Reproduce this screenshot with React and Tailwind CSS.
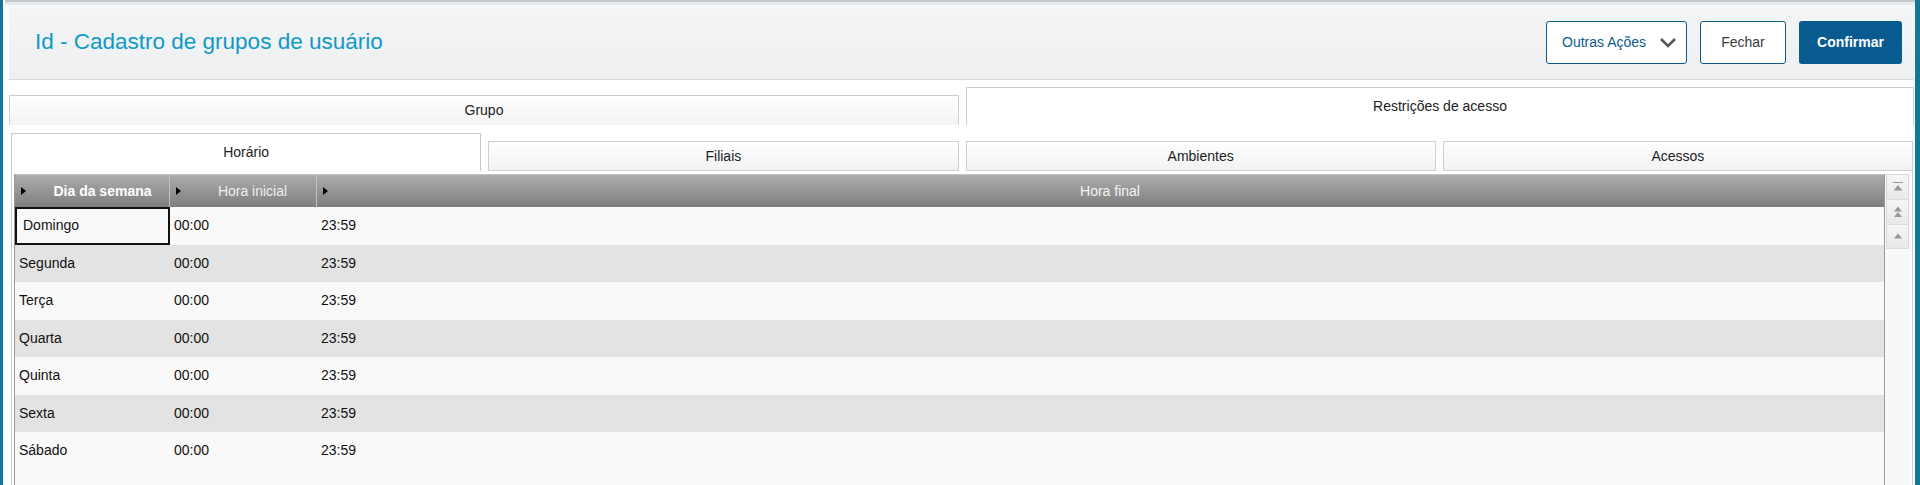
import React from 'react';

const rows = [
  { dia: 'Domingo', ini: '00:00', fim: '23:59' },
  { dia: 'Segunda', ini: '00:00', fim: '23:59' },
  { dia: 'Terça', ini: '00:00', fim: '23:59' },
  { dia: 'Quarta', ini: '00:00', fim: '23:59' },
  { dia: 'Quinta', ini: '00:00', fim: '23:59' },
  { dia: 'Sexta', ini: '00:00', fim: '23:59' },
  { dia: 'Sábado', ini: '00:00', fim: '23:59' },
];

const subTabs = ['Horário', 'Filiais', 'Ambientes', 'Acessos'];

function SortArrow() {
  return (
    <svg width="5" height="8" viewBox="0 0 5 8" className="shrink-0">
      <path d="M0 0 L5 4 L0 8 Z" fill="#000" />
    </svg>
  );
}

function ScrollIcon({ kind }) {
  return (
    <svg width="14" height="15" viewBox="0 0 14 15">
      {kind === 'top' && (
        <>
          <rect x="2" y="2" width="10" height="1" fill="#999" />
          <path d="M7 5 L11.5 10.5 L2.5 10.5 Z" fill="#999" />
        </>
      )}
      {kind === 'page' && (
        <>
          <path d="M7 1.5 L11 6.5 L3 6.5 Z" fill="#999" />
          <path d="M7 7 L11 12 L3 12 Z" fill="#999" />
        </>
      )}
      {kind === 'up' && <path d="M7 4.5 L11 9.5 L3 9.5 Z" fill="#999" />}
    </svg>
  );
}

export default function App() {
  return (
    <div
      className="w-[1920px] h-[485px] flex overflow-hidden bg-white text-[14px] text-[#222]"
      style={{ fontFamily: '"Liberation Sans", Arial, sans-serif' }}
    >
      {/* left accent */}
      <div className="w-[3px] bg-[#10789a] shrink-0" />

      <div className="flex-1 flex flex-col min-w-0">
        {/* top strip */}
        <div className="h-[5px] ml-[2px] border-t-2 border-[#c3c8cd] bg-[#e8eaec] shrink-0" />

        {/* header */}
        <header className="ml-[6px] mr-[1px] h-[75px] shrink-0 flex items-center justify-between bg-gradient-to-b from-[#f4f5f5] to-[#eeeff1] border-b border-[#d8d9da]">
          <h1 className="pl-[26px] text-[22.5px] text-[#0f9ac6] font-normal leading-none">
            Id - Cadastro de grupos de usuário
          </h1>
          <div className="flex items-center gap-[13px] pr-[12px]">
            <button className="w-[141px] h-[43px] bg-white border border-[#0e5c8a] rounded-[3px] flex items-center justify-between pl-[15px] pr-[9px] text-[#0e5c8a]">
              <span>Outras Ações</span>
              <svg width="18" height="11" viewBox="0 0 18 11">
                <path d="M2 2 L9 9 L16 2" fill="none" stroke="#555" strokeWidth="2.6" />
              </svg>
            </button>
            <button className="w-[86px] h-[43px] bg-white border border-[#0e5c8a] rounded-[3px] text-[#3a3a3a]">
              Fechar
            </button>
            <button className="w-[103px] h-[43px] bg-[#075b8f] rounded-[3px] text-white font-bold">
              Confirmar
            </button>
          </div>
        </header>

        {/* main tabs */}
        <div className="ml-[6px] mr-[1px] mt-[7px] flex items-end gap-[7px] shrink-0">
          <div className="w-[950px] h-[30px] flex items-center justify-center bg-gradient-to-b from-white to-[#f3f3f3] border border-b-0 border-[#cfcfcf] text-[#222]">
            Grupo
          </div>
          <div className="flex-1 h-[38px] flex items-center justify-center bg-white border border-b-0 border-[#cfcfcf] text-[#222]">
            Restrições de acesso
          </div>
        </div>

        {/* sub tabs + grid */}
        <div className="ml-[8px] mr-[2px] flex-1 flex flex-col min-h-0">
          <div className="pt-[8px] grid grid-cols-4 gap-[7px] items-end shrink-0">
            {subTabs.map((t, i) => (
              <div
                key={t}
                className={
                  i === 0
                    ? 'h-[38px] flex items-center justify-center bg-white border border-b-0 border-[#c9c9c9] text-[#222]'
                    : 'h-[30px] flex items-center justify-center bg-gradient-to-b from-white to-[#f2f2f2] border border-[#cfcfcf] text-[#222]'
                }
              >
                {t}
              </div>
            ))}
          </div>

          <div className="flex-1 flex min-h-0 border-l border-r border-[#cdcdcd] pt-[3px] pl-[2px] pr-[1px]">
            {/* table */}
            <div className="flex-1 min-w-0 flex flex-col border-l border-r border-[#999]">
              <div className="h-[33px] shrink-0 flex bg-gradient-to-b from-[#adadad] to-[#7e7e7e] border-t border-[#c4c4c4] text-white">
                <div className="w-[155px] flex items-center pl-[6px] border-r border-[#c2c2c2]">
                  <SortArrow />
                  <span className="flex-1 text-center font-bold pl-[10px]">Dia da semana</span>
                </div>
                <div className="w-[147px] flex items-center pl-[6px] border-r border-[#c2c2c2]">
                  <SortArrow />
                  <span className="flex-1 text-center text-[#eeeeee] pl-[8px]">Hora inicial</span>
                </div>
                <div className="flex-1 flex items-center pl-[6px]">
                  <SortArrow />
                  <span className="flex-1 text-center text-[#f4f4f4] pl-[8px]">Hora final</span>
                </div>
              </div>
              {rows.map((r, i) => (
                <div
                  key={r.dia}
                  className={`h-[37.5px] shrink-0 flex items-center text-[#111] ${i % 2 === 0 ? 'bg-[#f9f9f9]' : 'bg-[#e3e3e3]'}`}
                >
                  {i === 0 ? (
                    <div className="w-[155px] h-full flex items-center pl-[6px] border-2 border-[#111]">{r.dia}</div>
                  ) : (
                    <div className="w-[155px] pl-[4px]">{r.dia}</div>
                  )}
                  <div className="w-[147px] pl-[4px]">{r.ini}</div>
                  <div className="flex-1 pl-[4px]">{r.fim}</div>
                </div>
              ))}
              <div className="flex-1 bg-[#f9f9f9]" />
            </div>

            {/* scroll buttons */}
            <div className="w-[26px] shrink-0 bg-[#f7f8f9] flex flex-col pl-[1px] pr-[2px]">
              <div className="h-[26px] flex items-center justify-center bg-gradient-to-b from-[#f6f6f6] to-[#e9e9e9] border border-[#dadada]">
                <ScrollIcon kind="top" />
              </div>
              <div className="h-[25px] flex items-center justify-center bg-gradient-to-b from-[#f6f6f6] to-[#e9e9e9] border border-t-0 border-[#dadada]">
                <ScrollIcon kind="page" />
              </div>
              <div className="h-[24px] flex items-center justify-center bg-gradient-to-b from-[#f6f6f6] to-[#e9e9e9] border border-t-0 border-[#dadada]">
                <ScrollIcon kind="up" />
              </div>
            </div>
          </div>
        </div>
      </div>

      {/* right accent */}
      <div className="w-[5px] bg-[#10789a] shrink-0" />
    </div>
  );
}
